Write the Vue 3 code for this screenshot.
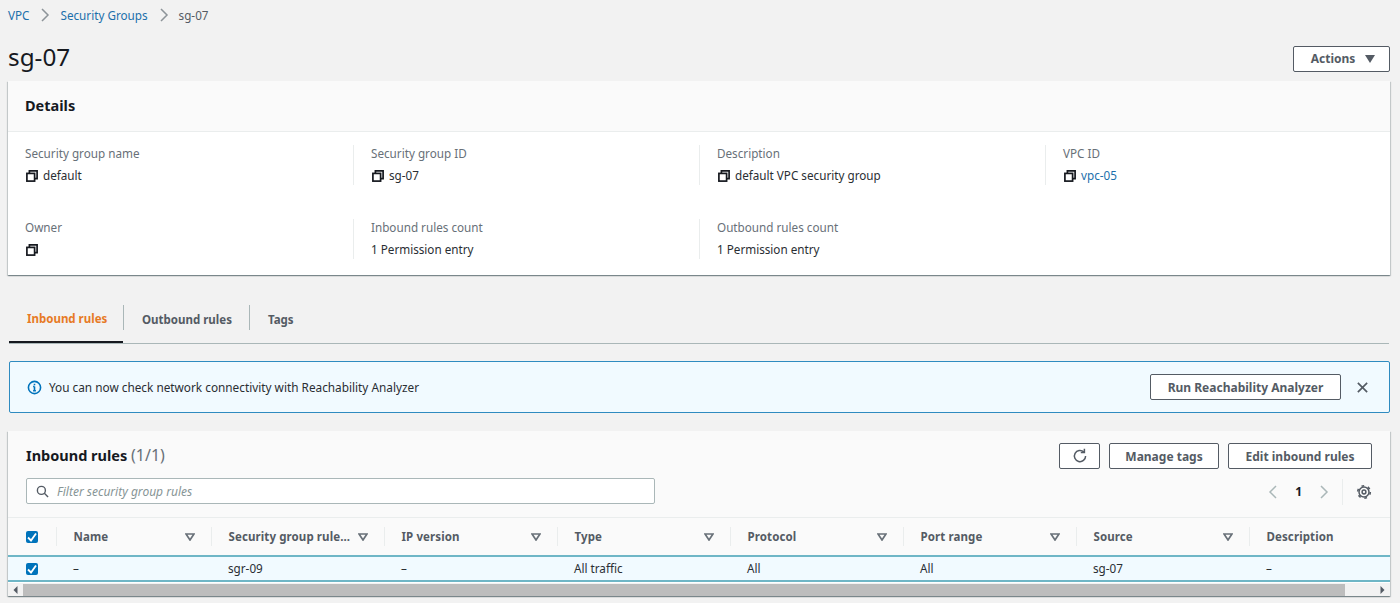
<script setup>
const details = [
  [
    { label: 'Security group name', value: 'default', copy: true },
    { label: 'Security group ID', value: 'sg-07', copy: true },
    { label: 'Description', value: 'default VPC security group', copy: true },
    { label: 'VPC ID', value: 'vpc-05', copy: true, link: true }
  ],
  [
    { label: 'Owner', value: '', copy: true },
    { label: 'Inbound rules count', value: '1 Permission entry' },
    { label: 'Outbound rules count', value: '1 Permission entry' }
  ]
]
const cols = [
  { name: 'Name', value: '–', w: 155 },
  { name: 'Security group rule...', value: 'sgr-09', w: 173 },
  { name: 'IP version', value: '–', w: 173 },
  { name: 'Type', value: 'All traffic', w: 173 },
  { name: 'Protocol', value: 'All', w: 173 },
  { name: 'Port range', value: 'All', w: 173 },
  { name: 'Source', value: 'sg-07', w: 173 },
  { name: 'Description', value: '–', w: 141, last: true }
]
</script>

<template>
  <div class="page">
    <nav class="crumbs">
      <a>VPC</a>
      <svg class="chev" viewBox="0 0 10 16"><path d="M2 2l6 6-6 6" /></svg>
      <a>Security Groups</a>
      <svg class="chev" viewBox="0 0 10 16"><path d="M2 2l6 6-6 6" /></svg>
      <span>sg-07</span>
    </nav>

    <header class="title-row">
      <h1>sg-07</h1>
      <button class="btn actions">Actions <svg viewBox="0 0 10 8" class="caret"><path d="M0 0h10L5 8z" /></svg></button>
    </header>

    <section class="card details">
      <h2 class="details-head">Details</h2>
      <div class="details-body">
        <div v-for="(row, i) in details" :key="i" class="d-row">
          <div v-for="item in row" :key="item.label" class="d-cell">
            <div class="d-label">{{ item.label }}</div>
            <div class="d-value">
              <svg v-if="item.copy" class="copy" viewBox="0 0 12 12">
                <rect x="0.900" y="3.400" width="7.700" height="7.700" />
                <path d="M3.400 3.400V0.900h7.700v7.700H8.600" />
              </svg>
              <a v-if="item.link">{{ item.value }}</a>
              <span v-else>{{ item.value }}</span>
            </div>
          </div>
        </div>
      </div>
    </section>

    <div class="tabs">
      <div class="tab active">Inbound rules</div>
      <div class="tab sep out">Outbound rules</div>
      <div class="tab sep">Tags</div>
    </div>

    <div class="alert">
      <svg class="info" viewBox="0 0 16 16">
        <circle cx="8" cy="8" r="6.500" />
        <path d="M8 7v4.500M6.500 11.500h3M6.500 7H8" />
        <path d="M8 4v1.600" />
      </svg>
      <span class="alert-text">You can now check network connectivity with Reachability Analyzer</span>
      <button class="btn run">Run Reachability Analyzer</button>
      <svg class="close" viewBox="0 0 14 14"><path d="M2 2l10 10M12 2L2 12" /></svg>
    </div>

    <section class="card rules">
      <div class="rules-head">
        <div class="rh-top">
          <h2>Inbound rules <span>(1/1)</span></h2>
          <div class="rh-btns">
            <button class="btn refresh">
              <svg viewBox="0 0 16 16"><path d="M13.600 8a5.600 5.600 0 1 1-1.800-4.100" /><path d="M12.400 0.800v3.600H8.800" /></svg>
            </button>
            <button class="btn tags">Manage tags</button>
            <button class="btn edit">Edit inbound rules</button>
          </div>
        </div>
        <div class="rh-bottom">
          <div class="search">
            <svg viewBox="0 0 14 14"><circle cx="5.800" cy="5.800" r="4.300" /><path d="M9 9l4 4" /></svg>
            <span>Filter security group rules</span>
          </div>
          <div class="pager">
            <svg class="pg" viewBox="0 0 10 16"><path d="M8 2L2 8l6 6" /></svg>
            <b>1</b>
            <svg class="pg" viewBox="0 0 10 16"><path d="M2 2l6 6-6 6" /></svg>
            <i class="pg-sep"></i>
            <svg class="gear" viewBox="0 0 16 16">
              <circle cx="8" cy="8" r="1.900" />
              <circle cx="8" cy="8" r="5" />
              <circle cx="8" cy="8" r="6.300" stroke-width="1.600" stroke-dasharray="2.700 3.897" />
            </svg>
          </div>
        </div>
      </div>

      <div class="thead">
        <div class="check-cell"><span class="checkbox"><svg viewBox="0 0 12 12"><path d="M2 6.500l3 3 5-7" /></svg></span></div>
        <div v-for="c in cols" :key="c.name" class="th" :style="{ width: c.w + 'px' }">
          <span>{{ c.name }}</span>
          <svg v-if="!c.last" class="sort" viewBox="0 0 10 8"><path d="M1 1h8L5 7z" /></svg>
        </div>
      </div>
      <div class="trow">
        <div class="check-cell"><span class="checkbox"><svg viewBox="0 0 12 12"><path d="M2 6.500l3 3 5-7" /></svg></span></div>
        <div v-for="c in cols" :key="c.name" class="td" :style="{ width: c.w + 'px' }">{{ c.value }}</div>
      </div>
      <div class="scrollbar">
        <svg viewBox="0 0 6 8"><path d="M5 0v8L1 4z" /></svg>
        <div class="track"><div class="thumb"></div></div>
        <svg viewBox="0 0 6 8"><path d="M1 0v8l4-4z" /></svg>
      </div>
    </section>
  </div>
</template>

<style>
html, body { margin: 0; background: #f2f2f2; }
</style>

<style scoped>
.page {
  width: 1400px;
  height: 603px;
  overflow: hidden;
  box-sizing: border-box;
  padding: 0 10px 0 8px;
  background: #f2f2f2;
  font-family: "Noto Sans", "Open Sans", sans-serif;
  font-size: 11.700px;
  color: #16191f;
}
a { color: #1b6fab; }
.crumbs {
  display: flex;
  align-items: center;
  height: 30px;
  color: #545b64;
}
.chev { width: 10px; height: 16px; margin: 0 10px 0 11px; fill: none; stroke: #8d9499; stroke-width: 1.500; }
.title-row {
  display: flex;
  justify-content: space-between;
  align-items: center;
  height: 51px;
}
h1 { margin: 2px 0 0; font-size: 24.300px; font-weight: 400; }
.btn {
  box-sizing: border-box;
  height: 26px;
  border: 1px solid #545b64;
  border-radius: 2px;
  background: #fff;
  color: #545b64;
  font: 700 12px "Noto Sans", "Open Sans", sans-serif;
  padding: 0;
  display: inline-flex;
  align-items: center;
  justify-content: center;
}
.actions { width: 97px; margin-top: 6px; padding-left: 3px; }
.caret { width: 10px; height: 8px; margin-left: 10px; fill: #545b64; }
.card {
  background: #fff;
  box-shadow: 0 1px 1px 0 rgba(0,28,36,.3), 1px 1px 1px 0 rgba(0,28,36,.15), -1px 1px 1px 0 rgba(0,28,36,.15);
}
.details { height: 194px; width: 1382px; }
.details-head {
  margin: 0;
  height: 51px;
  box-sizing: border-box;
  padding: 14px 17px 0;
  background: #fafafa;
  border-bottom: 1px solid #eaeded;
  font-size: 14.500px;
  font-weight: 700;
  line-height: 20px;
}
.details-body { padding: 13px 0 0 0; }
.d-row { display: flex; height: 40px; margin-bottom: 34px; }
.d-cell {
  flex: none;
  box-sizing: border-box;
  width: 346px;
  padding-left: 17px;
  border-left: 1px solid #eaeded;
}
.d-cell:first-child { border-left: 0; width: 345px; }
.d-label { height: 17px; line-height: 17px; color: #687078; }
.d-value { display: flex; align-items: center; height: 18px; margin-top: 4px; color: #16191f; }
.d-value span { color: #2a2e33; }
.copy { width: 12px; height: 12px; margin: 1px 5px 0 1px; fill: none; stroke: #16191f; stroke-width: 1.700; flex: none; }
.tabs {
  display: flex;
  height: 39px;
  margin: 29px 1px 0 1px;
  border-bottom: 1px solid #aab7b8;
  font-weight: 700;
  font-size: 11.500px;
  color: #545b64;
}
.tab {
  height: 39px;
  box-sizing: border-box;
  padding: 0 17px 8px 19px;
  display: flex;
  align-items: center;
  position: relative;
  white-space: nowrap;
}
.tab.active { color: #e77a25; width: 114px; padding-left: 18px; border-bottom: 2px solid #16191f; }
.tab.out { width: 126px; }
.tab.sep::before {
  content: "";
  position: absolute;
  left: 0;
  top: 1px;
  height: 25px;
  border-left: 1px solid #aab7b8;
}
.alert {
  display: flex;
  align-items: center;
  box-sizing: border-box;
  width: 1381px;
  height: 52px;
  margin: 17px 0 0 1px;
  padding: 0 20px 0 17px;
  background: #f1faff;
  border: 1px solid #2f8bc0;
  border-radius: 2px;
  color: #2a2e33;
  font-size: 11.800px;
}
.info { width: 15px; height: 15px; margin-right: 7px; fill: none; stroke: #0073bb; stroke-width: 1.700; }
.alert-text { flex: 1; }
.run { width: 191px; margin-right: 15px; }
.close { width: 13px; height: 13px; fill: none; stroke: #545b64; stroke-width: 1.800; }
.rules { position: relative; margin-top: 18px; width: 1382px; height: 165px; overflow: hidden; }
.rules-head { height: 87px; box-sizing: border-box; padding: 12px 18px 0 18px; background: #fafafa; border-bottom: 1px solid #eaeded; }
.rh-top { display: flex; justify-content: space-between; align-items: center; height: 26px; }
.rules h2 { margin: -2px 0 0; font-size: 14.500px; font-weight: 700; color: #16191f; }
.rules h2 span { font-weight: 400; font-size: 16px; color: #687078; }
.rh-btns { display: flex; gap: 9px; margin-top: 0; }
.refresh { width: 41px; }
.refresh svg { width: 16px; height: 16px; fill: none; stroke: #545b64; stroke-width: 1.500; }
.tags { width: 110px; }
.edit { width: 144px; }
.rh-bottom { display: flex; justify-content: space-between; align-items: center; margin-top: 9px; height: 26px; }
.search {
  box-sizing: border-box;
  width: 629px;
  height: 26px;
  background: #fff;
  border: 1px solid #aab7b8;
  border-radius: 2px;
  display: flex;
  align-items: center;
  padding-left: 9px;
  font-size: 12px;
  font-style: italic;
  color: #879596;
}
.search svg { width: 13px; height: 13px; margin-right: 8px; fill: none; stroke: #545b64; stroke-width: 1.500; }
.pager { display: flex; align-items: center; height: 26px; margin-top: 1px; }
.pg { width: 10px; height: 16px; fill: none; stroke: #aab7b8; stroke-width: 1.500; }
.pager b { margin: 0 17px 0 17px; font-size: 12px; }
.pg-sep { height: 26px; border-left: 1px solid #eaeded; margin: 0 13px 0 13px; }
.gear { width: 16px; height: 16px; fill: none; stroke: #545b64; stroke-width: 1.500; }
.thead, .trow { display: flex; align-items: center; }
.thead { height: 37px; background: #fafafa; font-weight: 700; font-size: 11.500px; letter-spacing: .1px; color: #545b64; }
.trow {
  height: 27px;
  box-sizing: border-box;
  background: #f1faff;
  border-top: 2px solid #6fb6c6;
  border-bottom: 2px solid #6fb6c6;
  color: #2a2e33;
}
.check-cell { width: 48px; flex: none; box-sizing: border-box; padding-left: 18px; display: flex; align-items: center; }
.checkbox { width: 12px; height: 12px; background: #0073bb; border-radius: 2px; display: flex; }
.checkbox svg { width: 12px; height: 12px; fill: none; stroke: #fff; stroke-width: 1.800; }
.th {
  flex: none;
  box-sizing: border-box;
  height: 19px;
  display: flex;
  align-items: center;
  justify-content: space-between;
  padding: 0 16px 0 16.500px;
  border-left: 1px solid #eaeded;
  white-space: nowrap;
}
.td { flex: none; box-sizing: border-box; padding: 0 0 2px 17px; white-space: nowrap; }
.sort { width: 10px; height: 8px; fill: none; stroke: #687078; stroke-width: 1.700; flex: none; }
.scrollbar { display: flex; align-items: center; height: 14px; background: #f2f2f2; margin-top: 1px; }
.scrollbar svg { width: 15px; height: 8px; fill: #545b64; flex: none; }
.track { flex: 1; height: 12px; }
.thumb { height: 12px; width: 1322px; background: #bdbdbd; }
</style>
